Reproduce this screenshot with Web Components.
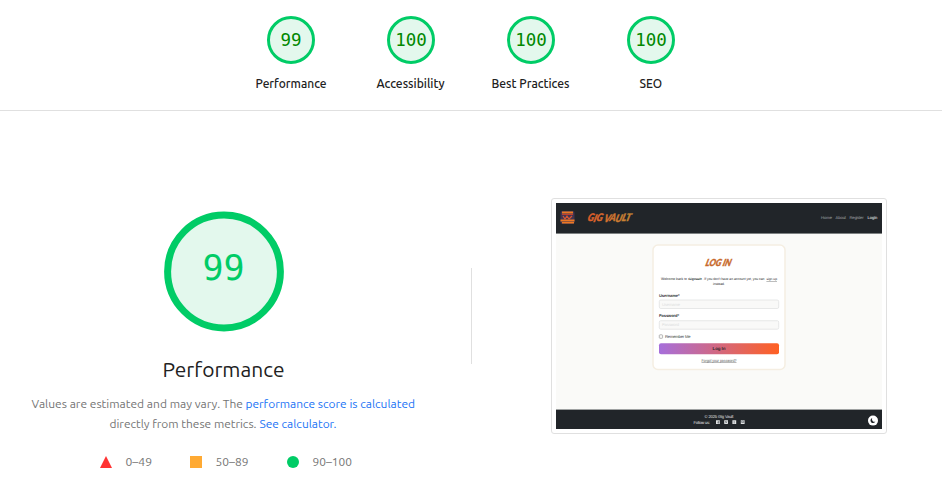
<!DOCTYPE html>
<html lang="en"><head><meta charset="utf-8"><title>Performance report</title>
<style>html,body{margin:0;background:#fff;overflow:hidden}body{width:942px;height:485px;font-family:Ubuntu,"Noto Sans",sans-serif;color:#212121}</style></head>
<body><report-page></report-page>
<script>
const define=(name,html,setup)=>customElements.define(name,class extends HTMLElement{
 connectedCallback(){if(this.shadowRoot)return;const r=this.attachShadow({mode:'open'});r.innerHTML=typeof html==='function'?html(this):html;if(setup)setup(this,r)}
});
// A line of text condensed or expanded to a fixed width.
define('fit-text',e=>{const w=e.getAttribute('w'),h=e.getAttribute('h')||20,s=e.getAttribute('size')||12;
 return `<style>:host{display:block;width:${w}px;height:${h}px;flex:none}svg{display:block;overflow:visible}text{fill:currentColor;font-size:${s}px;white-space:pre}</style><svg width="${w}" height="${h}"><text x="-.5" y="${e.getAttribute('base')||14}" textLength="${w}" lengthAdjust="spacingAndGlyphs">${e.textContent}</text></svg>`});
define('score-gauge',e=>{const big=e.hasAttribute('big'),d=big?120:48,s=big?7:3;
 return `<style>:host{display:flex;flex-direction:column;align-items:center;width:${big?'auto':'120px'}}svg{display:block;overflow:visible}circle{fill:#e3f8ed;stroke:#0c6;stroke-width:${s}}text{font-family:"DejaVu Sans Mono",monospace;text-anchor:middle;fill:${big?'#0c6':'#080'}}</style>
 <svg width="${d}" height="${d}"><circle cx="${big?60:24}" cy="${big?59.5:24}" r="${big?56.4:22.5}"/><text x="${big?59.5:24}" y="${big?67.8:30}" font-size="${big?35:17.5}">${e.getAttribute('score')}</text></svg><slot></slot>`});
define('score-header',`<style>:host{display:flex;justify-content:center;padding-top:16px;box-sizing:border-box;border-bottom:1px solid #e0e0e0;height:111px}fit-text{margin-top:10px;font-weight:500}</style>
<score-gauge score="99"><fit-text w="71" size="12">Performance</fit-text></score-gauge>
<score-gauge score="100"><fit-text w="68" size="12">Accessibility</fit-text></score-gauge>
<score-gauge score="100"><fit-text w="78" size="12">Best Practices</fit-text></score-gauge>
<score-gauge score="100"><fit-text w="22.5" size="12">SEO</fit-text></score-gauge>`);
define('score-legend',`<style>:host{display:flex;color:#757575;height:20px;margin:18px 0 0 5px}.i{display:flex;align-items:center}.i+.i{margin-left:38px}svg{margin-right:14px;display:block}</style>
<div class="i"><svg width="12" height="12"><path d="M6 0L12 12H0Z" fill="#f33"/></svg><fit-text w="26.5" size="11.5">0–49</fit-text></div>
<div class="i"><svg width="12" height="12"><path d="M0 0H12V12H0Z" fill="#fa3"/></svg><fit-text w="33" size="11.5">50–89</fit-text></div>
<div class="i"><svg width="12" height="12"><circle cx="6" cy="6" r="6" fill="#0c6"/></svg><fit-text w="39.5" size="11.5">90–100</fit-text></div>`);
define('score-summary',`<style>:host{display:flex;flex-direction:column;align-items:center;box-sizing:border-box;width:447px;padding-top:101px;color:#757575}.t{color:#212121;margin-top:23px;font-weight:400}.r{display:flex;height:20px}.p{margin-top:7px}.b{color:#1a73f5}</style>
<score-gauge big score="99"></score-gauge><fit-text class="t" w="122" h="32" size="20.5" base="22">Performance</fit-text>
<div class="p r"><fit-text w="211.5" size="11.6">Values are estimated and may vary. The</fit-text><fit-text style="margin-left:3px" class="b" w="169.5" size="11.6">performance score is calculated</fit-text></div>
<div class="r"><fit-text w="147" size="11.6">directly from these metrics.</fit-text><fit-text style="margin-left:3px" class="b" w="77" size="11.6">See calculator.</fit-text></div>
<score-legend></score-legend>`);
define('page-thumbnail',`<style>:host{display:block;box-sizing:border-box;width:336px;height:236px;padding:4px;border:1px solid #e0e0e0;border-radius:3px}svg{display:block}text{font-family:"Liberation Sans",Arial,sans-serif;font-size:4.1px;text-rendering:geometricPrecision}.intro text{font-size:3.5px}.intro .s{font-size:3.1px}.logo{font-family:Lato,sans-serif;font-weight:900;font-style:italic;stroke-width:.4}</style>
<svg width="326" height="226" viewBox="556 203 326 226">
<defs><linearGradient id="g"><stop stop-color="#a66fdb"/><stop offset="1" stop-color="#ff6022"/></linearGradient><linearGradient id="o"><stop stop-color="#e25b29"/><stop offset="1" stop-color="#c58a35"/></linearGradient></defs>
<path fill="#fafaf8" d="M556 203h326v226H556z"/><path fill="#212529" d="M556 203h326v30.5H556z"/><path stroke="#777b7d" stroke-width=".7" d="M556 233.5h326M556 409.5h326"/>
<rect x="560.5" y="211" width="14" height="13" rx="2" fill="#413451"/><path fill="#ed7822" d="M562 211.5h11v2h-11zM560.5 219.5h14v2h-14zM562 222h12v1.5h-12z"/><path fill="#bd3e32" d="M562 214h11v1h-11z"/><path d="M563 216l2 3 2-3 2 3 3-3" stroke="#d75632" stroke-width="1.2" fill="none"/>
<text class="logo" transform="translate(587 221.3) skewX(-16)" style="font-size:10.5px" textLength="43" lengthAdjust="spacingAndGlyphs" fill="url(#o)" stroke="url(#o)"><tspan>G</tspan><tspan dy=".8">I</tspan><tspan dy="-.8">G </tspan><tspan dy=".7">V</tspan><tspan dy="-.9">A</tspan><tspan dy=".7">U</tspan><tspan dy="-.5">L</tspan><tspan dy="-.4">T</tspan></text>
<g fill="#a4a7a9"><text x="821" y="219.3" textLength="11">Home</text><text x="835.5" y="219.3" textLength="10.5">About</text><text x="849.5" y="219.3" textLength="14">Register</text><text x="867.5" y="219.3" textLength="9.8" fill="#fff">Login</text></g>
<rect x="653" y="245" width="132" height="124.5" rx="5" fill="#fff" stroke="#f5eee2" stroke-width="1.5"/>
<text class="logo" transform="translate(705 265.7) skewX(-16)" style="font-size:9.7px" textLength="25.5" lengthAdjust="spacingAndGlyphs" fill="#c8692b" stroke="#c8692b">LOG IN</text>
<g fill="#24272a" class="intro"><text x="661" y="280" textLength="26" lengthAdjust="spacingAndGlyphs">Welcome back to</text><text class="s" x="688.2" y="280" font-weight="bold" textLength="13.4" lengthAdjust="spacingAndGlyphs">GigVault</text><text x="702.4" y="280" textLength="62" lengthAdjust="spacingAndGlyphs">. If you don't have an account yet, you can</text><text class="s" x="766.4" y="280" textLength="10.6" lengthAdjust="spacingAndGlyphs" text-decoration="underline">sign up</text><text x="713" y="285.3" textLength="12">instead.</text></g>
<g fill="#34373a"><text x="659" y="296.6" font-weight="bold" textLength="20.5">Username*</text><text x="659" y="317" font-weight="bold" textLength="20">Password*</text><text x="665" y="337.9" textLength="25.5">Remember Me</text></g>
<g fill="#f9f9f8" stroke="#dedfe0" stroke-width=".7"><rect x="659.3" y="300" width="119.4" height="8.5" rx="1.5"/><rect x="659.3" y="320.7" width="119.4" height="8.5" rx="1.5"/><rect x="659.3" y="334.8" width="3.3" height="3.5" rx=".7" stroke="#999"/></g>
<g fill="#dcdddd"><text x="662" y="305.6" textLength="18">Username</text><text x="662" y="326.3" textLength="17">Password</text></g>
<rect x="659" y="343.3" width="120" height="11" rx="2" fill="url(#g)"/><text x="712.5" y="350.3" style="font-size:4.5px" font-weight="bold" fill="#342a2d" textLength="13">Log In</text><text x="701.5" y="361.5" fill="#555" text-decoration="underline" textLength="35" lengthAdjust="spacingAndGlyphs">Forgot your password?</text>
<path fill="#212529" d="M556 410h326v19H556z"/><g fill="#e1e3e4"><text x="704.5" y="417.6" textLength="29">© 2025 Gig Vault</text><text x="693.5" y="423.5" textLength="16.5">Follow us:</text><path d="M716 420.2h3.8v3.8H716zM724.2 420.2h3.8v3.8h-3.8zM732.4 420.2h3.8v3.8h-3.8zM740.8 420.2h3.8v3.8h-3.8z"/></g><g stroke="#444b50" stroke-width=".5" fill="none"><path d="M718.3 423.8v-2.5h1M717.3 422.3h1.9M725 421l2.3 2.3m0-2.3l-2.3 2.3M734.2 421v2.5M741.7 421h2v1.5h-2z"/></g>
<circle cx="873" cy="420.6" r="5" fill="#fff"/><path d="M872.2 418a2.6 2.6 0 1 0 3.2 3.6 2.6 2.6 0 0 1-3.2-3.6Z" fill="#212529"/>
</svg>`);
define('report-page',`<style>:host{display:block;width:942px}.m{display:flex;height:374px}.d{width:1px;height:96px;margin:157px 0 0 24px;background:#e0e0e0}page-thumbnail{margin:87px 0 0 79px}</style><score-header></score-header><main class="m"><score-summary></score-summary><div class="d"></div><page-thumbnail></page-thumbnail></main>`);
</script></body></html>
